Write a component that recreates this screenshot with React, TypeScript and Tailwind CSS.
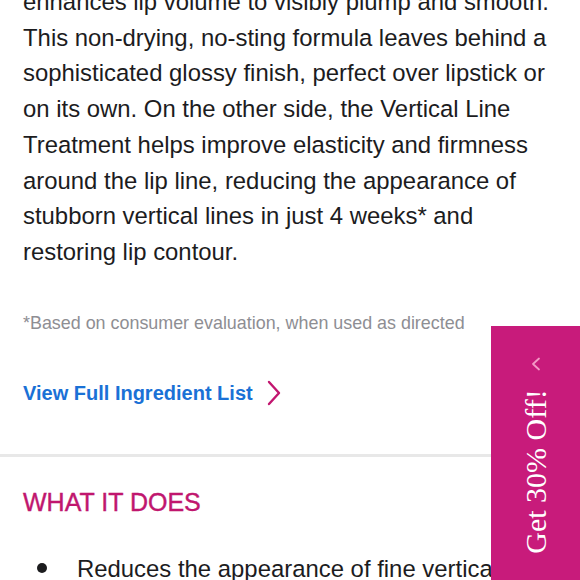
import React from 'react'

const lines = [
  'enhances lip volume to visibly plump and smooth.',
  'This non-drying, no-sting formula leaves behind a',
  'sophisticated glossy finish, perfect over lipstick or',
  'on its own. On the other side, the Vertical Line',
  'Treatment helps improve elasticity and firmness',
  'around the lip line, reducing the appearance of',
  'stubborn vertical lines in just 4 weeks* and',
  'restoring lip contour.',
]

export default function App() {
  return (
    <div className="relative w-[580px] h-[580px] overflow-hidden bg-white font-['Liberation_Sans',Arial,sans-serif]">
      <div className="px-[23px]">
        <p className="-mt-[16px] text-[23.9px] leading-[35.7px] text-[#1c1c1e] whitespace-nowrap">
          {lines.map((l, i) => (
            <span key={i} className="block">{l}</span>
          ))}
        </p>

        <p className="mt-[41px] text-[17.9px] leading-[24px] text-[#8e8e93]">
          *Based on consumer evaluation, when used as directed
        </p>

        <a className="mt-[44px] flex items-center gap-[14px] text-[20px] leading-[28px] font-bold text-[#1a71d6]">
          View Full Ingredient List
          <svg width="14" height="26" viewBox="0 0 14 26" fill="none">
            <path d="M2 2 L12 13 L2 24" stroke="#c2166f" strokeWidth="2.4" strokeLinecap="round" strokeLinejoin="round" />
          </svg>
        </a>
      </div>

      <div className="mt-[47px] h-[3px] bg-[#e8e8e8]" />

      <div className="px-[23px]">
        <h2 className="mt-[30px] text-[25px] leading-[30px] text-[#c0166e] uppercase [-webkit-text-stroke:0.4px_#c0166e]">What it does</h2>
        <ul className="mt-[34px] text-[23.9px] leading-[35.7px] text-[#1c1c1e] whitespace-nowrap">
          <li className="flex items-center">
            <span className="ml-[14px] w-[10px] h-[10px] rounded-full bg-[#1c1c1e]" />
            <span className="ml-[30px]">Reduces the appearance of fine vertical lines</span>
          </li>
        </ul>
      </div>

      <div className="absolute left-[491px] top-[326px] w-[89px] h-[254px] bg-[#c81b7b] flex flex-col items-center">
        <svg className="mt-[31px]" width="10" height="14" viewBox="0 0 10 14" fill="none">
          <path d="M8 1.5 L2 7 L8 12.5" stroke="#f39ac6" strokeWidth="1.8" strokeLinecap="round" strokeLinejoin="round" />
        </svg>
        <div className="mt-[15px] h-[170px] flex items-center justify-center">
          <span className="block -rotate-90 whitespace-nowrap text-white text-[30px] font-['Liberation_Serif',Georgia,serif]">
            Get 30% Off!
          </span>
        </div>
      </div>
    </div>
  )
}
